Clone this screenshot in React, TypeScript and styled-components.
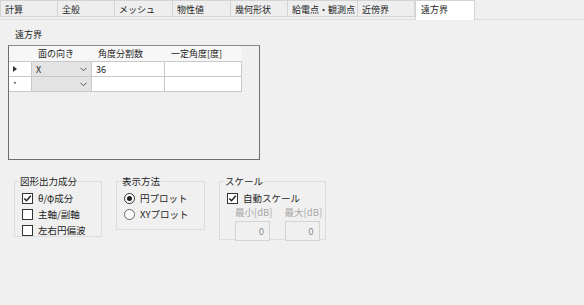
import styled, { createGlobalStyle } from "styled-components";

const Global = createGlobalStyle`
  html, body { margin: 0; padding: 0; background: #f0f0f0; }
  body {
    font-family: "Noto Sans CJK JP", "Noto Sans", sans-serif;
    font-size: 9px;
    color: #1e1e1e;
  }
`;

const Page = styled.div`
  width: 584px;
  height: 305px;
  background: #f0f0f0;
  overflow: hidden;
`;

const TabStrip = styled.div`
  display: flex;
  height: 19px;
  border-bottom: 1px solid #dadada;
`;

const Tab = styled.div<{ $w: number; $active?: boolean }>`
  width: ${(p) => p.$w}px;
  box-sizing: border-box;
  height: ${(p) => (p.$active ? 20 : 17)}px;
  background: ${(p) => (p.$active ? "#ffffff" : "#eeeeee")};
  border: 1px solid #d4d4d4;
  border-bottom: ${(p) => (p.$active ? "none" : "1px solid #d4d4d4")};
  border-left: ${(p) => (p.$active ? "1px solid #d4d4d4" : "none")};
  padding: ${(p) => (p.$active ? "2px 0 0 5px" : "2px 0 0 4px")};
  line-height: 13px;
  white-space: nowrap;
  &:first-child { border-left: 1px solid #d4d4d4; }
`;

const Body = styled.div`
  padding: 8px 0 0 8px;
`;

const Caption = styled.div`
  padding-left: 7px;
  line-height: 14px;
  height: 17px;
`;

const Grid = styled.div`
  width: 252px;
  height: 115px;
  box-sizing: border-box;
  border: 1px solid #6e6e6e;
  border-top-color: #8c8c8c;
`;

const Row = styled.div`
  display: grid;
  grid-template-columns: 23px 60px 73px 77px;
  height: 15px;
`;

const HeadRow = styled(Row)`
  height: 16px;
`;

const Cell = styled.div<{ $head?: boolean; $combo?: boolean }>`
  box-sizing: border-box;
  border-right: 1px solid ${(p) => (p.$head ? "#f4f4f4" : "#c8c8c8")};
  border-bottom: 1px solid #c8c8c8;
  background: ${(p) => (p.$combo ? "#e3e3e3" : p.$head ? "#f7f7f7" : "#ffffff")};
  padding-left: ${(p) => (p.$head ? 6 : 4)}px;
  line-height: 13px;
  position: relative;
  display: flex;
  align-items: center;
  white-space: nowrap;
`;

const RowMark = styled(Cell)`
  background: #ffffff;
  color: #444;
  padding-left: 4px;
  font-size: 8px;
`;

const Chevron = styled.svg`
  position: absolute;
  right: 4px;
  top: 5px;
`;

const Groups = styled.div`
  display: flex;
  align-items: flex-start;
  margin-top: 15px;
  padding-left: 6px;
  gap: 14px;
`;

const Group = styled.fieldset<{ $w: number; $h: number }>`
  margin: 0;
  width: ${(p) => p.$w}px;
  height: ${(p) => p.$h}px;
  box-sizing: border-box;
  border: 1px solid #dcdcdc;
  padding: 0 0 0 7px;
  legend {
    padding: 0 1px;
    margin-left: -3px;
    line-height: 13px;
    font-size: 9.5px;
  }
`;

const Options = styled.div`
  display: flex;
  flex-direction: column;
  margin-top: 2px;
`;

const Option = styled.div`
  display: flex;
  align-items: center;
  gap: 5px;
  height: 16px;
  font-size: 9.5px;
`;

const Box = styled.span`
  width: 11px;
  height: 11px;
  box-sizing: border-box;
  border: 1px solid #333;
  background: #fff;
  display: inline-flex;
  align-items: center;
  justify-content: center;
`;

const Radio = styled.span<{ $on?: boolean }>`
  width: 11px;
  height: 11px;
  box-sizing: border-box;
  border: 1px solid ${(p) => (p.$on ? "#333" : "#666")};
  border-radius: 50%;
  background: #fff;
  display: inline-flex;
  align-items: center;
  justify-content: center;
  &::after {
    content: "";
    display: ${(p) => (p.$on ? "block" : "none")};
    width: 5px;
    height: 5px;
    border-radius: 50%;
    background: #1e1e1e;
  }
`;

const ScaleFields = styled.div`
  display: flex;
  gap: 12px;
  padding-left: 8px;
`;

const Field = styled.div`
  display: flex;
  flex-direction: column;
  color: #a8a8a8;
  line-height: 13px;
  white-space: nowrap;
  font-size: 9.5px;
`;

const NumBox = styled.div`
  width: 35px;
  height: 20px;
  box-sizing: border-box;
  border: 1px solid #d4d4d4;
  background: #f0f0f0;
  text-align: right;
  padding-right: 5px;
  line-height: 18px;
  margin-top: 2px;
  color: #8a8a8a;
`;

function Check() {
  return (
    <Box>
      <svg width="9" height="9" viewBox="0 0 9 9">
        <path d="M1.3 4.6 L3.5 6.8 L7.8 1.8" fill="none" stroke="#1e1e1e" strokeWidth="1.4" />
      </svg>
    </Box>
  );
}

function Chev() {
  return (
    <Chevron width="7" height="5" viewBox="0 0 7 5">
      <path d="M0.5 0.8 L3.5 3.8 L6.5 0.8" fill="none" stroke="#555" strokeWidth="1" />
    </Chevron>
  );
}

function Pointer() {
  return (
    <svg width="4" height="6" viewBox="0 0 4 6">
      <path d="M0 0 L4 3 L0 6 Z" fill="#333" />
    </svg>
  );
}

const tabs: [string, number][] = [
  ["計算", 58],
  ["全般", 57],
  ["メッシュ", 58],
  ["物性値", 58],
  ["幾何形状", 57],
  ["給電点・観測点", 70],
  ["近傍界", 57],
];

export default function App() {
  return (
    <Page>
      <Global />
      <TabStrip>
        {tabs.map(([t, w]) => (
          <Tab key={t} $w={w}>
            {t}
          </Tab>
        ))}
        <Tab $w={60} $active>
          遠方界
        </Tab>
      </TabStrip>
      <Body>
        <Caption>遠方界</Caption>
        <Grid>
          <HeadRow>
            <Cell $head />
            <Cell $head>面の向き</Cell>
            <Cell $head>角度分割数</Cell>
            <Cell $head>一定角度[度]</Cell>
          </HeadRow>
          <Row>
            <RowMark>
              <Pointer />
            </RowMark>
            <Cell $combo>
              X
              <Chev />
            </Cell>
            <Cell>36</Cell>
            <Cell />
          </Row>
          <Row>
            <RowMark>*</RowMark>
            <Cell $combo>
              <Chev />
            </Cell>
            <Cell />
            <Cell />
          </Row>
        </Grid>
        <Groups>
          <Group $w={88} $h={62}>
            <legend>図形出力成分</legend>
            <Options>
              <Option>
                <Check />θ/φ成分
              </Option>
              <Option>
                <Box />主軸/副軸
              </Option>
              <Option>
                <Box />左右円偏波
              </Option>
            </Options>
          </Group>
          <Group $w={89} $h={55}>
            <legend>表示方法</legend>
            <Options>
              <Option>
                <Radio $on />円プロット
              </Option>
              <Option>
                <Radio />XYプロット
              </Option>
            </Options>
          </Group>
          <Group $w={107} $h={65}>
            <legend>スケール</legend>
            <Options>
              <Option>
                <Check />自動スケール
              </Option>
            </Options>
            <ScaleFields>
              <Field>
                最小[dB]
                <NumBox>0</NumBox>
              </Field>
              <Field>
                最大[dB]
                <NumBox>0</NumBox>
              </Field>
            </ScaleFields>
          </Group>
        </Groups>
      </Body>
    </Page>
  );
}
